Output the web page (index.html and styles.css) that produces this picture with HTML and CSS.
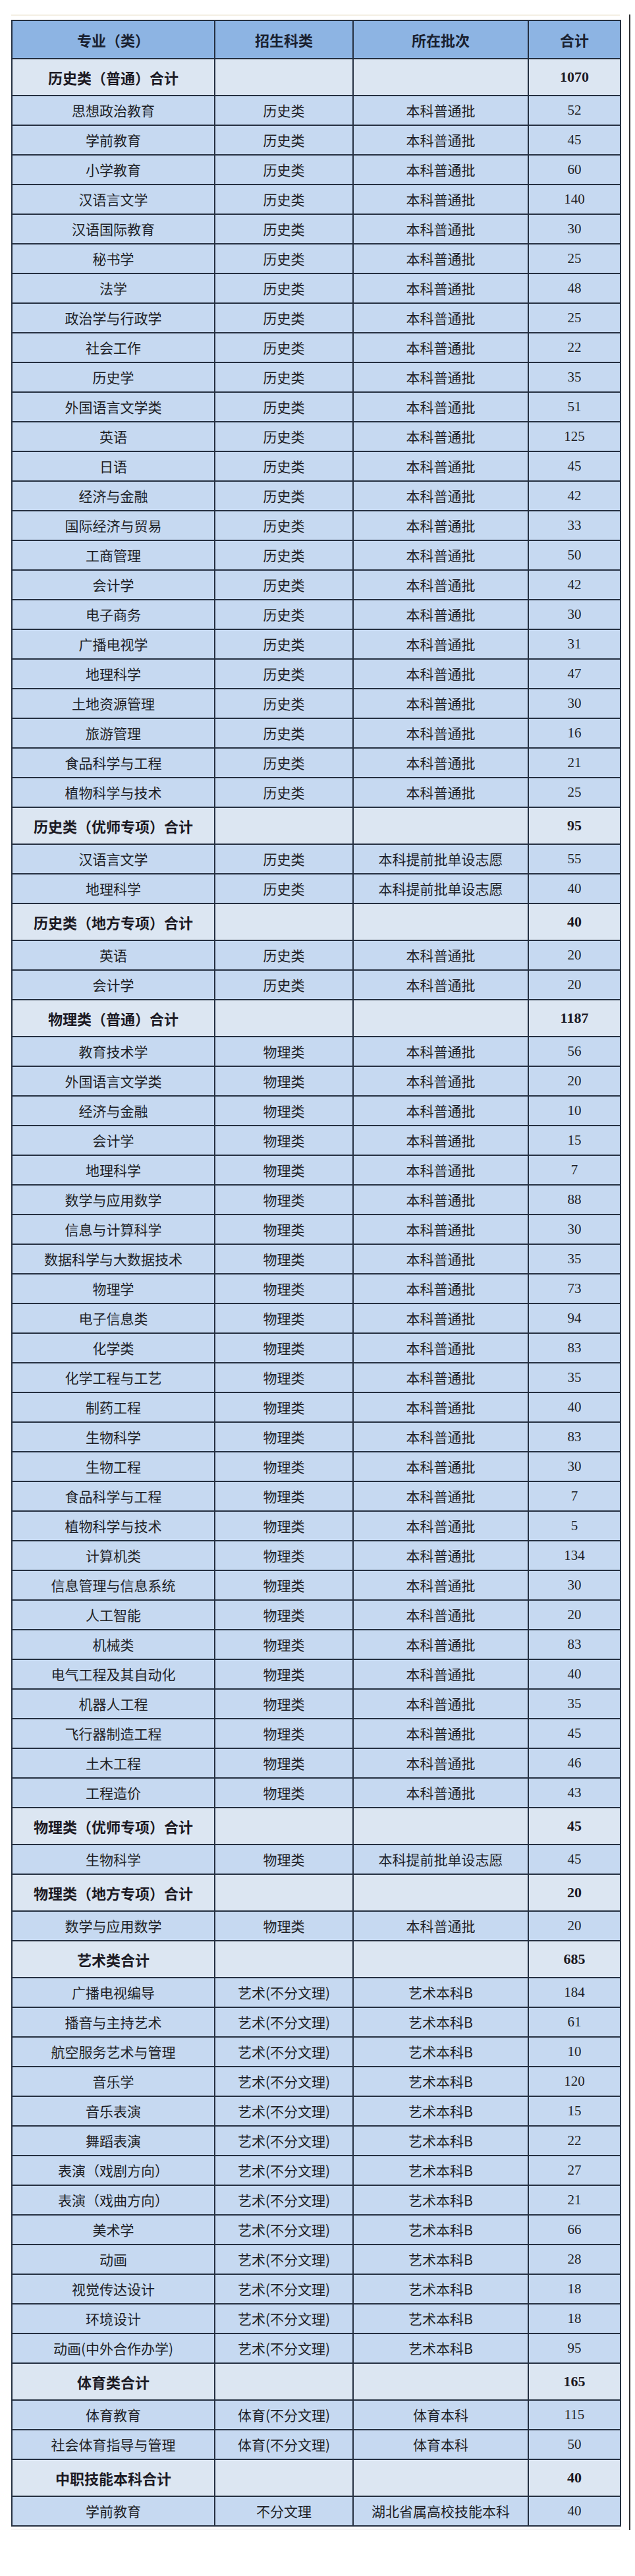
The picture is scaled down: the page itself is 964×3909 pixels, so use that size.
FILE: index.html
```html
<!DOCTYPE html>
<html lang="zh-CN">
<head>
<meta charset="utf-8">
<title>招生计划</title>
<link rel="stylesheet" href="styles.css">
</head>
<body>
<div class="page">
  <div class="sheet">
    <div class="edge"></div>
    <table class="plan">
      <colgroup>
        <col class="c-major"><col class="c-subject"><col class="c-batch"><col class="c-total">
      </colgroup>
      <thead>
        <tr class="head"><th>专业（类）</th><th>招生科类</th><th>所在批次</th><th>合计</th></tr>
      </thead>
      <tbody>
        <tr class="sum"><td>历史类（普通）合计</td><td></td><td></td><td class="num">1070</td></tr>
        <tr><td>思想政治教育</td><td>历史类</td><td>本科普通批</td><td class="num">52</td></tr>
        <tr><td>学前教育</td><td>历史类</td><td>本科普通批</td><td class="num">45</td></tr>
        <tr><td>小学教育</td><td>历史类</td><td>本科普通批</td><td class="num">60</td></tr>
        <tr><td>汉语言文学</td><td>历史类</td><td>本科普通批</td><td class="num">140</td></tr>
        <tr><td>汉语国际教育</td><td>历史类</td><td>本科普通批</td><td class="num">30</td></tr>
        <tr><td>秘书学</td><td>历史类</td><td>本科普通批</td><td class="num">25</td></tr>
        <tr><td>法学</td><td>历史类</td><td>本科普通批</td><td class="num">48</td></tr>
        <tr><td>政治学与行政学</td><td>历史类</td><td>本科普通批</td><td class="num">25</td></tr>
        <tr><td>社会工作</td><td>历史类</td><td>本科普通批</td><td class="num">22</td></tr>
        <tr><td>历史学</td><td>历史类</td><td>本科普通批</td><td class="num">35</td></tr>
        <tr><td>外国语言文学类</td><td>历史类</td><td>本科普通批</td><td class="num">51</td></tr>
        <tr><td>英语</td><td>历史类</td><td>本科普通批</td><td class="num">125</td></tr>
        <tr><td>日语</td><td>历史类</td><td>本科普通批</td><td class="num">45</td></tr>
        <tr><td>经济与金融</td><td>历史类</td><td>本科普通批</td><td class="num">42</td></tr>
        <tr><td>国际经济与贸易</td><td>历史类</td><td>本科普通批</td><td class="num">33</td></tr>
        <tr><td>工商管理</td><td>历史类</td><td>本科普通批</td><td class="num">50</td></tr>
        <tr><td>会计学</td><td>历史类</td><td>本科普通批</td><td class="num">42</td></tr>
        <tr><td>电子商务</td><td>历史类</td><td>本科普通批</td><td class="num">30</td></tr>
        <tr><td>广播电视学</td><td>历史类</td><td>本科普通批</td><td class="num">31</td></tr>
        <tr><td>地理科学</td><td>历史类</td><td>本科普通批</td><td class="num">47</td></tr>
        <tr><td>土地资源管理</td><td>历史类</td><td>本科普通批</td><td class="num">30</td></tr>
        <tr><td>旅游管理</td><td>历史类</td><td>本科普通批</td><td class="num">16</td></tr>
        <tr><td>食品科学与工程</td><td>历史类</td><td>本科普通批</td><td class="num">21</td></tr>
        <tr><td>植物科学与技术</td><td>历史类</td><td>本科普通批</td><td class="num">25</td></tr>

        <tr class="sum"><td>历史类（优师专项）合计</td><td></td><td></td><td class="num">95</td></tr>
        <tr><td>汉语言文学</td><td>历史类</td><td>本科提前批单设志愿</td><td class="num">55</td></tr>
        <tr><td>地理科学</td><td>历史类</td><td>本科提前批单设志愿</td><td class="num">40</td></tr>

        <tr class="sum"><td>历史类（地方专项）合计</td><td></td><td></td><td class="num">40</td></tr>
        <tr><td>英语</td><td>历史类</td><td>本科普通批</td><td class="num">20</td></tr>
        <tr><td>会计学</td><td>历史类</td><td>本科普通批</td><td class="num">20</td></tr>

        <tr class="sum"><td>物理类（普通）合计</td><td></td><td></td><td class="num">1187</td></tr>
        <tr><td>教育技术学</td><td>物理类</td><td>本科普通批</td><td class="num">56</td></tr>
        <tr><td>外国语言文学类</td><td>物理类</td><td>本科普通批</td><td class="num">20</td></tr>
        <tr><td>经济与金融</td><td>物理类</td><td>本科普通批</td><td class="num">10</td></tr>
        <tr><td>会计学</td><td>物理类</td><td>本科普通批</td><td class="num">15</td></tr>
        <tr><td>地理科学</td><td>物理类</td><td>本科普通批</td><td class="num">7</td></tr>
        <tr><td>数学与应用数学</td><td>物理类</td><td>本科普通批</td><td class="num">88</td></tr>
        <tr><td>信息与计算科学</td><td>物理类</td><td>本科普通批</td><td class="num">30</td></tr>
        <tr><td>数据科学与大数据技术</td><td>物理类</td><td>本科普通批</td><td class="num">35</td></tr>
        <tr><td>物理学</td><td>物理类</td><td>本科普通批</td><td class="num">73</td></tr>
        <tr><td>电子信息类</td><td>物理类</td><td>本科普通批</td><td class="num">94</td></tr>
        <tr><td>化学类</td><td>物理类</td><td>本科普通批</td><td class="num">83</td></tr>
        <tr><td>化学工程与工艺</td><td>物理类</td><td>本科普通批</td><td class="num">35</td></tr>
        <tr><td>制药工程</td><td>物理类</td><td>本科普通批</td><td class="num">40</td></tr>
        <tr><td>生物科学</td><td>物理类</td><td>本科普通批</td><td class="num">83</td></tr>
        <tr><td>生物工程</td><td>物理类</td><td>本科普通批</td><td class="num">30</td></tr>
        <tr><td>食品科学与工程</td><td>物理类</td><td>本科普通批</td><td class="num">7</td></tr>
        <tr><td>植物科学与技术</td><td>物理类</td><td>本科普通批</td><td class="num">5</td></tr>
        <tr><td>计算机类</td><td>物理类</td><td>本科普通批</td><td class="num">134</td></tr>
        <tr><td>信息管理与信息系统</td><td>物理类</td><td>本科普通批</td><td class="num">30</td></tr>
        <tr><td>人工智能</td><td>物理类</td><td>本科普通批</td><td class="num">20</td></tr>
        <tr><td>机械类</td><td>物理类</td><td>本科普通批</td><td class="num">83</td></tr>
        <tr><td>电气工程及其自动化</td><td>物理类</td><td>本科普通批</td><td class="num">40</td></tr>
        <tr><td>机器人工程</td><td>物理类</td><td>本科普通批</td><td class="num">35</td></tr>
        <tr><td>飞行器制造工程</td><td>物理类</td><td>本科普通批</td><td class="num">45</td></tr>
        <tr><td>土木工程</td><td>物理类</td><td>本科普通批</td><td class="num">46</td></tr>
        <tr><td>工程造价</td><td>物理类</td><td>本科普通批</td><td class="num">43</td></tr>

        <tr class="sum"><td>物理类（优师专项）合计</td><td></td><td></td><td class="num">45</td></tr>
        <tr><td>生物科学</td><td>物理类</td><td>本科提前批单设志愿</td><td class="num">45</td></tr>

        <tr class="sum"><td>物理类（地方专项）合计</td><td></td><td></td><td class="num">20</td></tr>
        <tr><td>数学与应用数学</td><td>物理类</td><td>本科普通批</td><td class="num">20</td></tr>

        <tr class="sum"><td>艺术类合计</td><td></td><td></td><td class="num">685</td></tr>
        <tr><td>广播电视编导</td><td>艺术(不分文理)</td><td>艺术本科B</td><td class="num">184</td></tr>
        <tr><td>播音与主持艺术</td><td>艺术(不分文理)</td><td>艺术本科B</td><td class="num">61</td></tr>
        <tr><td>航空服务艺术与管理</td><td>艺术(不分文理)</td><td>艺术本科B</td><td class="num">10</td></tr>
        <tr><td>音乐学</td><td>艺术(不分文理)</td><td>艺术本科B</td><td class="num">120</td></tr>
        <tr><td>音乐表演</td><td>艺术(不分文理)</td><td>艺术本科B</td><td class="num">15</td></tr>
        <tr><td>舞蹈表演</td><td>艺术(不分文理)</td><td>艺术本科B</td><td class="num">22</td></tr>
        <tr><td>表演（戏剧方向）</td><td>艺术(不分文理)</td><td>艺术本科B</td><td class="num">27</td></tr>
        <tr><td>表演（戏曲方向）</td><td>艺术(不分文理)</td><td>艺术本科B</td><td class="num">21</td></tr>
        <tr><td>美术学</td><td>艺术(不分文理)</td><td>艺术本科B</td><td class="num">66</td></tr>
        <tr><td>动画</td><td>艺术(不分文理)</td><td>艺术本科B</td><td class="num">28</td></tr>
        <tr><td>视觉传达设计</td><td>艺术(不分文理)</td><td>艺术本科B</td><td class="num">18</td></tr>
        <tr><td>环境设计</td><td>艺术(不分文理)</td><td>艺术本科B</td><td class="num">18</td></tr>
        <tr><td>动画(中外合作办学)</td><td>艺术(不分文理)</td><td>艺术本科B</td><td class="num">95</td></tr>

        <tr class="sum"><td>体育类合计</td><td></td><td></td><td class="num">165</td></tr>
        <tr><td>体育教育</td><td>体育(不分文理)</td><td>体育本科</td><td class="num">115</td></tr>
        <tr><td>社会体育指导与管理</td><td>体育(不分文理)</td><td>体育本科</td><td class="num">50</td></tr>

        <tr class="sum"><td>中职技能本科合计</td><td></td><td></td><td class="num">40</td></tr>
        <tr><td>学前教育</td><td>不分文理</td><td>湖北省属高校技能本科</td><td class="num">40</td></tr>
      </tbody>
    </table>
    <div class="edge edge-bottom"></div>
  </div>
</div>
</body>
</html>
```

FILE: styles.css
```css
html, body {
  margin: 0;
  padding: 0;
  background: #ffffff;
}

body {
  font-family: "Noto Sans CJK SC", "Noto Sans", sans-serif;
  color: #1e1f26;
}

.page {
  padding-top: 22px;
}

.sheet {
  width: 957px;
  box-sizing: border-box;
  border-right: 2px solid #2f3033;
  padding: 0 0 0 17px;
}

.edge {
  width: 924px;
  height: 2px;
  background: #f4efe4;
  margin-bottom: 6px;
}

.edge-bottom {
  margin: 3px 0 0;
  height: 2px;
  background: #f2f2f4;
}

.plan {
  width: 924px;
  border-collapse: collapse;
  table-layout: fixed;
}

.c-major { width: 308px; }
.c-subject { width: 210px; }
.c-batch { width: 266px; }
.c-total { width: 140px; }

.plan th,
.plan td {
  border: 2px solid #253041;
  padding: 0;
  text-align: center;
  vertical-align: middle;
  font-size: 21px;
  line-height: 1;
  white-space: nowrap;
}

.plan tbody tr {
  height: 45px;
  background: #c6d9f1;
}

.plan .head {
  height: 58px;
  background: #8db4e3;
}

.plan .head th {
  font-size: 22px;
  font-weight: 700;
  color: #1a2130;
}

.plan tbody tr.sum {
  height: 56px;
  background: #dce6f2;
}

.plan .sum td {
  font-size: 22px;
  font-weight: 700;
  color: #1c1a24;
}

.plan .num {
  font-family: "Liberation Serif", "DejaVu Serif", serif;
  font-size: 21px;
}

.plan .sum .num {
  font-size: 22px;
  font-weight: 700;
}
```
